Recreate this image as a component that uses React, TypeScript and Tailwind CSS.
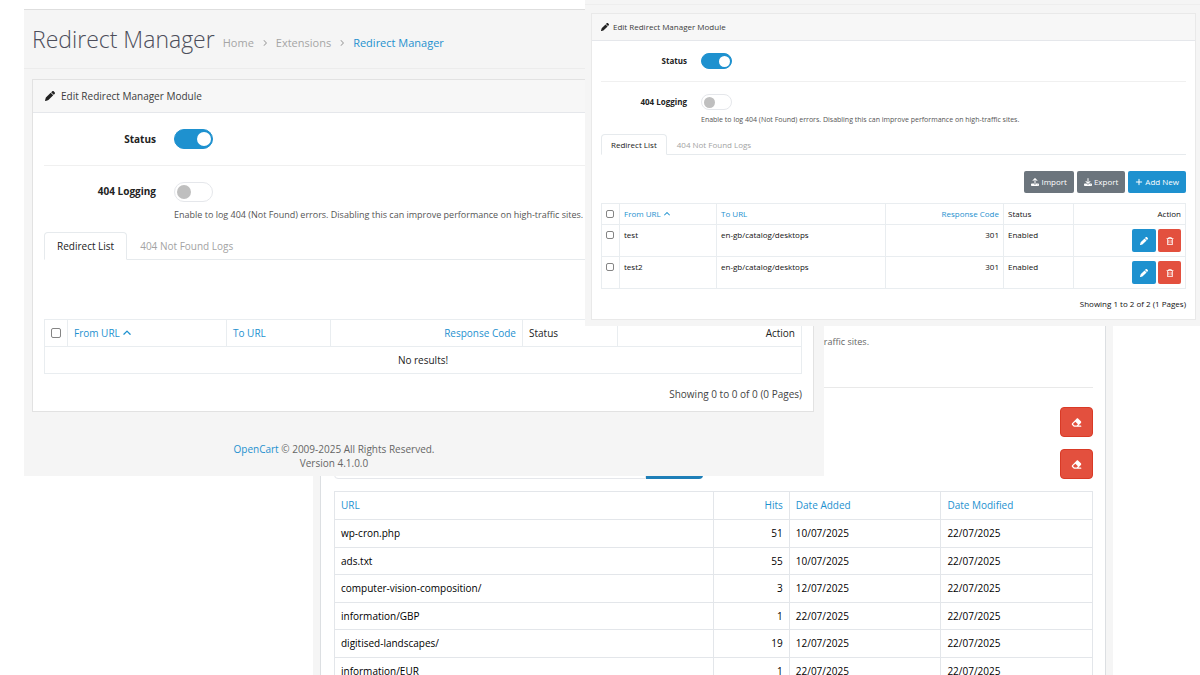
import { useState } from 'react';
import type { ReactNode } from 'react';
import {
  FaAngleRight,
  FaAngleUp,
  FaDownload,
  FaEraser,
  FaPen,
  FaPlus,
  FaRegTrashCan,
  FaUpload,
} from 'react-icons/fa6';

type Size = 'sm' | 'md';

const HELP =
  'Enable to log 404 (Not Found) errors. Disabling this can improve performance on high-traffic sites.';

const redirects = [
  { from: 'test', to: 'en-gb/catalog/desktops', code: 301, status: 'Enabled' },
  { from: 'test2', to: 'en-gb/catalog/desktops', code: 301, status: 'Enabled' },
];

const logs = [
  { url: 'wp-cron.php', hits: 51, added: '10/07/2025', modified: '22/07/2025' },
  { url: 'ads.txt', hits: 55, added: '10/07/2025', modified: '22/07/2025' },
  { url: 'computer-vision-composition/', hits: 3, added: '12/07/2025', modified: '22/07/2025' },
  { url: 'information/GBP', hits: 1, added: '22/07/2025', modified: '22/07/2025' },
  { url: 'digitised-landscapes/', hits: 19, added: '12/07/2025', modified: '22/07/2025' },
  { url: 'information/EUR', hits: 1, added: '22/07/2025', modified: '22/07/2025' },
];

const switchSizes = {
  sm: 'w-[31px] h-4 before:size-[11px] before:left-0.5 checked:before:left-[17px]',
  md: 'w-[39px] h-5 before:size-3.5 before:left-0.5 checked:before:left-[22px]',
};

function Switch({ id, size, on }: { id: string; size: Size; on?: boolean }) {
  return (
    <input
      id={id}
      type="checkbox"
      role="switch"
      defaultChecked={on}
      className={`relative block shrink-0 appearance-none rounded-full border border-gray-200 bg-white checked:border-[#1e91cf] checked:bg-[#1e91cf] before:absolute before:inset-y-0 before:my-auto before:rounded-full before:bg-[#bfbfbf] checked:before:bg-white ${switchSizes[size]}`}
    />
  );
}

function Tick({ size, label }: { size: Size; label: string }) {
  return (
    <input
      type="checkbox"
      aria-label={label}
      className={`block appearance-none rounded-xs border border-[#858585] bg-white checked:bg-[#1e91cf] ${
        size === 'sm' ? 'size-2' : 'size-2.5'
      }`}
    />
  );
}

function CardHeader({ size }: { size: Size }) {
  return (
    <div
      className={`flex items-center border-b border-gray-200 bg-[#f7f7f7] text-[#3c3c3c] ${
        size === 'sm' ? 'h-[27px] gap-1 px-[9px] text-[8px]' : 'h-[33px] gap-1.5 px-3 text-[10px]'
      }`}
    >
      <FaPen className="text-[#222]" />
      <h2>Edit Redirect Manager Module</h2>
    </div>
  );
}

const settingSizes = {
  sm: { label: 'w-[86px] mr-3.5 text-[8px]', status: 'h-[41px]', logging: 'pt-3 pb-2', help: 'mt-1 text-[7px] leading-3' },
  md: { label: 'w-28 mr-[18px] text-[10px]', status: 'h-[53px]', logging: 'pt-4 pb-2.5', help: 'mt-1.5 text-[9px] leading-[14px]' },
};

function Settings({ size }: { size: Size }) {
  const s = settingSizes[size];
  return (
    <>
      <div className={`flex items-center border-b border-[#f0f0f0] ${s.status}`}>
        <label htmlFor={`status-${size}`} className={`text-right font-bold text-[#222] ${s.label}`}>
          Status
        </label>
        <Switch id={`status-${size}`} size={size} on />
      </div>
      <div className={`flex items-start ${s.logging}`}>
        <label htmlFor={`logging-${size}`} className={`pt-0.5 text-right font-bold text-[#222] ${s.label}`}>
          404 Logging
        </label>
        <div>
          <Switch id={`logging-${size}`} size={size} />
          <p className={`text-[#555] ${s.help}`}>{HELP}</p>
        </div>
      </div>
    </>
  );
}

function Tabs({ size }: { size: Size }) {
  const [active, setActive] = useState('Redirect List');
  return (
    <div role="tablist" className={`flex border-b border-[#e6eaed] ${size === 'sm' ? 'h-[21px] text-[8px]' : 'h-7 text-[10px]'}`}>
      {['Redirect List', '404 Not Found Logs'].map((tab) => (
        <button
          key={tab}
          role="tab"
          aria-selected={tab === active}
          onClick={() => setActive(tab)}
          className={`-mb-px rounded-t border ${size === 'sm' ? 'px-[9px]' : 'px-3'} ${
            tab === active ? 'border-[#e6eaed] border-b-white bg-white text-[#222]' : 'border-transparent text-[#a3a3a3]'
          }`}
        >
          {tab}
        </button>
      ))}
    </div>
  );
}

function Link({ children }: { children: ReactNode }) {
  return (
    <a href="#" className="inline-flex items-center gap-0.5 text-[#1e91cf] hover:underline">
      {children}
    </a>
  );
}

function EraseButton() {
  return (
    <button
      aria-label="Clear"
      className="flex h-[30px] w-[33px] items-center justify-center rounded-sm border border-[#d93a26] bg-[#e3503e] text-white"
    >
      <FaEraser className="size-[11px]" />
    </button>
  );
}

// 404 log page, furthest back
function LogsWindow() {
  const cell = 'border border-[#e3e6ea] px-1.5 font-normal';
  return (
    <section className="absolute top-80 left-[313px] w-2/3 bg-[#f5f5f5] px-[7px] text-[10px]">
      <div className="border-x border-[#dcdfe2] bg-white pr-3 pl-[13px]">
        <div className="flex h-17 justify-end border-b border-[#e9e9e9] pt-[15px] pr-56">
          <p className="text-[9px] leading-[14px] text-[#666]">traffic sites.</p>
        </div>
        <div className="flex justify-end pt-[19px]">
          <EraseButton />
        </div>
        <div className="mt-3 flex justify-between">
          <div className="flex">
            <input aria-label="URL" className="w-[312px] rounded-l border border-gray-200" />
            <button aria-label="Add" className="w-[57px] rounded-r bg-[#1e7fb8]" />
          </div>
          <EraseButton />
        </div>
        <table className="mt-3 w-full table-fixed border-collapse text-black">
          <thead>
            <tr className="h-7">
              <th className={`w-1/2 text-left ${cell}`}><Link>URL</Link></th>
              <th className={`w-1/10 text-right ${cell}`}><Link>Hits</Link></th>
              <th className={`w-1/5 text-left ${cell}`}><Link>Date Added</Link></th>
              <th className={`w-1/5 text-left ${cell}`}><Link>Date Modified</Link></th>
            </tr>
          </thead>
          <tbody>
            {logs.map((log) => (
              <tr key={log.url} className="odd:h-7 even:h-[27px]">
                <td className={cell}>{log.url}</td>
                <td className={`text-right ${cell}`}>{log.hits}</td>
                <td className={cell}>{log.added}</td>
                <td className={cell}>{log.modified}</td>
              </tr>
            ))}
          </tbody>
        </table>
      </div>
    </section>
  );
}

// Empty redirect list
function EmptyWindow() {
  const cell = 'border border-[#e9edf0] px-1.5 font-normal';
  return (
    <section className="absolute top-[9px] left-6 w-2/3 border-t border-[#dedede] bg-[#f5f5f5] text-[10px] text-[#222]">
      <header className="flex h-[59px] items-center gap-2 border-b border-[#ececec] px-2">
        <h1 className="text-[23px] font-light text-[#4c4d5a]">Redirect Manager</h1>
        <nav className="mt-2 flex items-center gap-[7px] text-[11px] text-[#a5a5a5]">
          <a href="#">Home</a>
          <FaAngleRight className="size-2" />
          <a href="#">Extensions</a>
          <FaAngleRight className="size-2" />
          <Link>Redirect Manager</Link>
        </nav>
      </header>
      <div className="mt-2.5 mr-2.5 ml-2 border border-[#e2e2e2] bg-white">
        <CardHeader size="md" />
        <div className="px-[11px]">
          <Settings size="md" />
          <Tabs size="md" />
          <table className="mt-[59px] w-full table-fixed border-collapse">
            <thead>
              <tr className="h-[27px]">
                <th className={`w-[23px] ${cell}`}><Tick size="md" label="Select all" /></th>
                <th className={`w-[159px] text-left ${cell}`}><Link>From URL <FaAngleUp /></Link></th>
                <th className={`w-[104px] text-left ${cell}`}><Link>To URL</Link></th>
                <th className={`w-48 text-right ${cell}`}><Link>Response Code</Link></th>
                <th className={`w-[95px] text-left ${cell}`}>Status</th>
                <th className={`text-right ${cell}`}>Action</th>
              </tr>
            </thead>
            <tbody>
              <tr className="h-[27px]">
                <td colSpan={6} className={`text-center ${cell}`}>No results!</td>
              </tr>
            </tbody>
          </table>
          <p className="pt-[13px] pb-2.5 text-right leading-[14px] text-[#444]">Showing 0 to 0 of 0 (0 Pages)</p>
        </div>
      </div>
      <footer className="mt-[30px] mr-45 pb-1.5 text-center leading-[14px] text-[#666]">
        <Link>OpenCart</Link> © 2009-2025 All Rights Reserved.
        <br />
        Version 4.1.0.0
      </footer>
    </section>
  );
}

// Redirect list with entries, on top
function ListWindow() {
  const cell = 'border border-[#e9edf0] px-1 font-normal';
  const button = 'flex h-[22px] items-center gap-0.5 rounded-xs px-[7px] text-white';
  return (
    <section className="absolute top-0 right-0 left-[585px] bg-[#f5f5f5] pb-1.5 text-[8px] text-[#111]">
      <div className="h-[5px] border-b border-[#eeeeee]" />
      <div className="mt-2 mr-1 ml-1.5 border border-[#e9e9e9] bg-white">
        <CardHeader size="sm" />
        <div className="px-[9px]">
          <Settings size="sm" />
          <Tabs size="sm" />
          <div className="mt-4 flex justify-end gap-[3px]">
            <button className={`bg-[#6c757d] ${button}`}><FaUpload /> Import</button>
            <button className={`bg-[#6c757d] ${button}`}><FaDownload /> Export</button>
            <button className={`bg-[#1e91cf] ${button}`}><FaPlus /> Add New</button>
          </div>
          <table className="mt-2.5 w-full table-fixed border-collapse">
            <thead>
              <tr className="h-[21px]">
                <th className={`w-[18px] ${cell}`}><Tick size="sm" label="Select all" /></th>
                <th className={`w-[97px] text-left ${cell}`}><Link>From URL <FaAngleUp /></Link></th>
                <th className={`w-[169px] text-left ${cell}`}><Link>To URL</Link></th>
                <th className={`w-[118px] text-right ${cell}`}><Link>Response Code</Link></th>
                <th className={`w-[70px] text-left ${cell}`}>Status</th>
                <th className={`text-right ${cell}`}>Action</th>
              </tr>
            </thead>
            <tbody>
              {redirects.map((r) => (
                <tr key={r.from} className="align-top">
                  <td className={`pt-1.5 ${cell}`}><Tick size="sm" label={`Select ${r.from}`} /></td>
                  <td className={`pt-1 ${cell}`}>{r.from}</td>
                  <td className={`pt-1 ${cell}`}>{r.to}</td>
                  <td className={`pt-1 text-right ${cell}`}>{r.code}</td>
                  <td className={`pt-1 ${cell}`}>{r.status}</td>
                  <td className={`py-1 ${cell}`}>
                    <div className="flex justify-end gap-0.5">
                      <button aria-label={`Edit ${r.from}`} className="flex h-[23px] w-6 items-center justify-center rounded-xs bg-[#1e91cf] text-white">
                        <FaPen />
                      </button>
                      <button aria-label={`Delete ${r.from}`} className="flex h-[23px] w-[23px] items-center justify-center rounded-xs bg-[#e3503e] text-white">
                        <FaRegTrashCan />
                      </button>
                    </div>
                  </td>
                </tr>
              ))}
            </tbody>
          </table>
          <p className="py-2 text-right leading-[14px]">Showing 1 to 2 of 2 (1 Pages)</p>
        </div>
      </div>
    </section>
  );
}

export default function App() {
  return (
    <main className="relative h-screen overflow-hidden bg-white font-['Open_Sans',sans-serif]">
      <LogsWindow />
      <EmptyWindow />
      <ListWindow />
    </main>
  );
}
